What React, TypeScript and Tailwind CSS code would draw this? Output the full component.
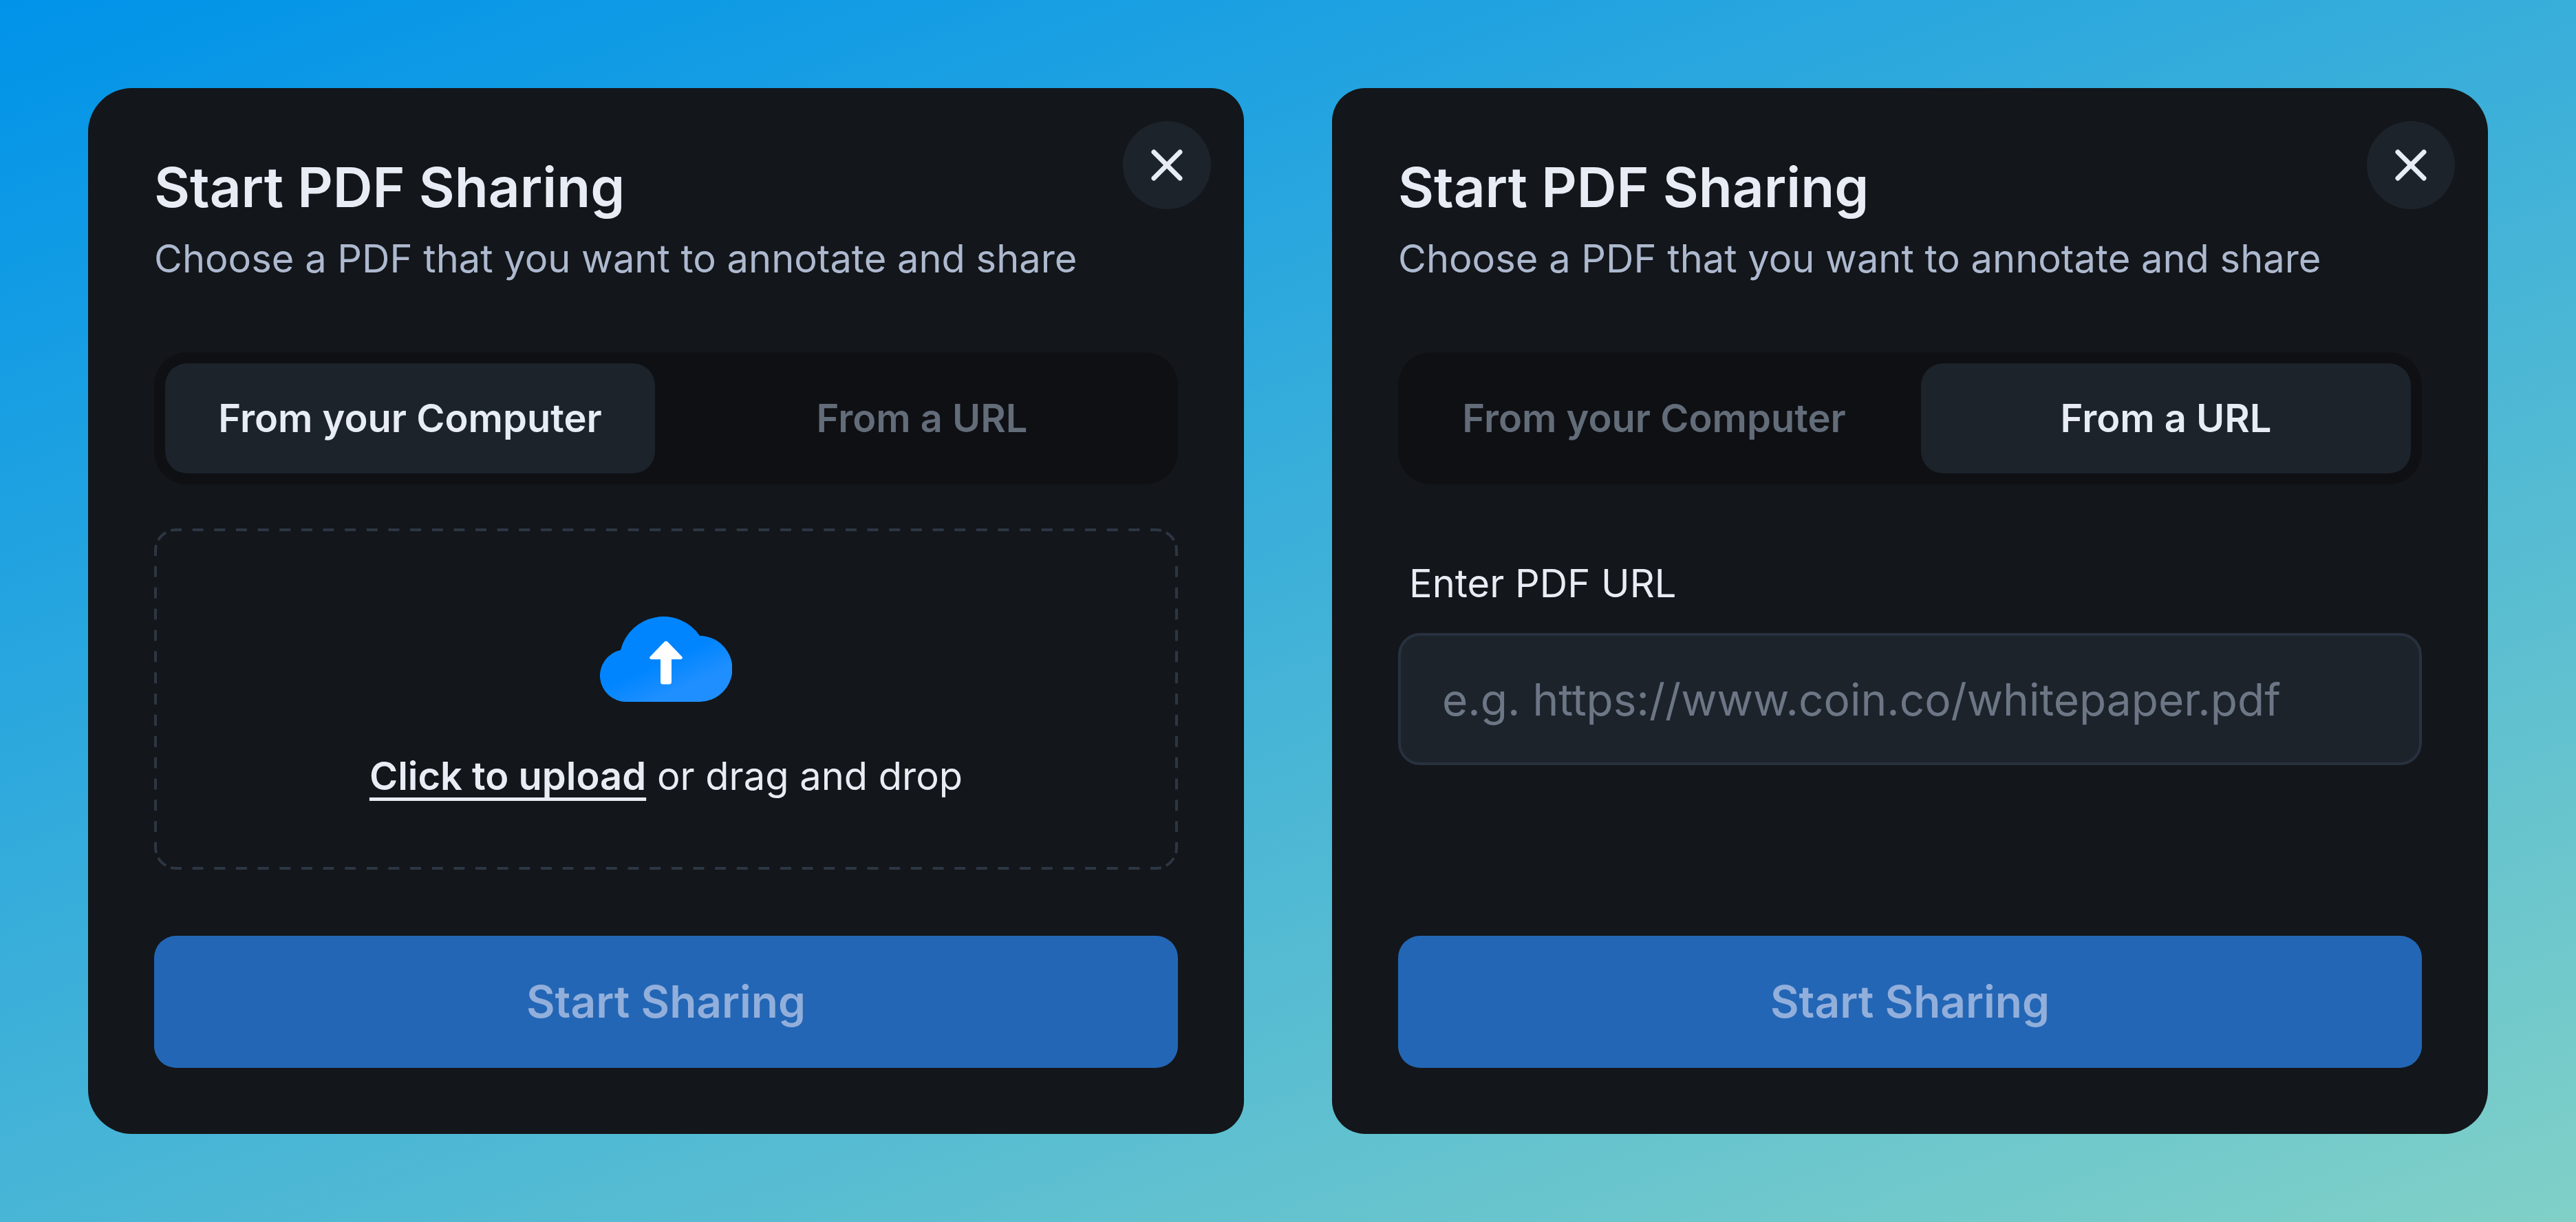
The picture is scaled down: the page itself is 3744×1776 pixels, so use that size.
import React, { useId, useState } from "react";
import { X } from "lucide-react";

type Source = "computer" | "url";

function CloudUpload() {
  return (
    <svg className="h-31 w-48" viewBox="0 0 192 124" aria-hidden="true">
      <defs>
        <linearGradient id="cloud-fill" gradientUnits="userSpaceOnUse" x1="70" y1="0" x2="125" y2="124">
          <stop offset="0.5" stopColor="#0085ff" />
          <stop offset="0.85" stopColor="#1f8fff" />
        </linearGradient>
      </defs>
      <path
        d="M38 124A38 38 0 0 1 30 48.850A64 64 0 0 1 145 28A48 48 0 0 1 144 124Z"
        fill="url(#cloud-fill)"
      />
      <path
        d="M93.200 37.200a4 4 0 0 1 5.600 0L119.300 58.500a2.200 2.200 0 0 1-1.600 3.700H104V95a3.500 3.500 0 0 1-3.500 3.500h-9A3.500 3.500 0 0 1 88 95V62.200H74.300a2.200 2.200 0 0 1-1.600-3.700Z"
        fill="#fff"
      />
    </svg>
  );
}

function DashedFrame() {
  return (
    <svg
      className="pointer-events-none absolute inset-0 h-full w-full"
      viewBox="0 0 1488 496"
      preserveAspectRatio="none"
      fill="none"
      stroke="#2d3643"
      strokeWidth="4"
      strokeDashoffset="8"
      aria-hidden="true"
    >
      <path d="M32 2H1456M32 494H1456" strokeDasharray="16 15.644" />
      <path d="M2 32V464M1486 32V464" strokeDasharray="16 14.857" />
      <path
        d="M2 32A30 30 0 0 1 32 2M1456 2A30 30 0 0 1 1486 32M1486 464A30 30 0 0 1 1456 494M32 494A30 30 0 0 1 2 464"
        strokeDasharray="16 7.562"
      />
    </svg>
  );
}

function UploadPanel() {
  return (
    <label className="relative flex cursor-pointer flex-col items-center gap-17 pt-32 pb-24 text-[56px] leading-20 text-[#e8ecf4]">
      <DashedFrame />
      <input type="file" accept="application/pdf" className="sr-only" />
      <CloudUpload />
      <span>
        <span className="font-semibold underline decoration-[5px] underline-offset-[11px] [text-decoration-skip-ink:none]">
          Click to upload
        </span>{" "}
        or drag and drop
      </span>
    </label>
  );
}

function UrlPanel() {
  const id = useId();
  return (
    <div className="flex flex-col gap-8 pt-10">
      <label htmlFor={id} className="px-4 text-[56px] leading-20 text-[#e8ecf4]">
        Enter PDF URL
      </label>
      <input
        id={id}
        type="url"
        placeholder="e.g. https://www.coin.co/whitepaper.pdf"
        className="h-48 w-full rounded-[32px] border-4 border-[#28313e] bg-[#1c232b] px-15 text-[64px] text-[#e8ecf4] outline-none placeholder:text-[#6c7685]"
      />
    </div>
  );
}

const tabs: { id: Source; label: string }[] = [
  { id: "computer", label: "From your Computer" },
  { id: "url", label: "From a URL" },
];

function ShareDialog({ initial, corners }: { initial: Source; corners: string }) {
  const [source, setSource] = useState<Source>(initial);
  return (
    <section
      className={`relative flex min-w-0 flex-1 flex-col bg-[#13161a] p-24 ${corners}`}
      role="dialog"
      aria-label="Start PDF Sharing"
    >
      <button
        type="button"
        aria-label="Close"
        className="absolute top-12 right-12 flex size-32 items-center justify-center rounded-full bg-[#1c232b] text-[#e8ecf4]"
      >
        <X className="size-19" strokeWidth={2.2} />
      </button>

      <header className="flex flex-col gap-4">
        <h2 className="text-[80px] leading-24 font-semibold text-[#e8ecf4]">Start PDF Sharing</h2>
        <p className="text-[56px] leading-20 text-[#adb9cf]">Choose a PDF that you want to annotate and share</p>
      </header>

      <div role="tablist" className="mt-24 flex h-48 gap-8 rounded-[48px] bg-[#0f1014] p-4">
        {tabs.map((tab) => (
          <button
            key={tab.id}
            type="button"
            role="tab"
            aria-selected={source === tab.id}
            onClick={() => setSource(tab.id)}
            className={`flex-1 basis-0 rounded-[32px] text-[56px] leading-20 font-semibold ${
              source === tab.id ? "bg-[#1c232b] text-[#e8ecf4]" : "text-[#636c79]"
            }`}
          >
            {tab.label}
          </button>
        ))}
      </div>

      <div className="mt-16 min-h-124">{source === "computer" ? <UploadPanel /> : <UrlPanel />}</div>

      <button
        type="button"
        className="mt-24 h-48 rounded-[32px] bg-[#2366b5] text-[64px] font-semibold text-[#92afdb]"
      >
        Start Sharing
      </button>
    </section>
  );
}

export default function App() {
  return (
    <main className="flex min-h-screen items-start gap-32 bg-[linear-gradient(160deg,#0093e9_0%,#80d0c7_100%)] p-32 font-[Inter,sans-serif] [font-optical-sizing:none]">
      <ShareDialog initial="computer" corners="rounded-l-[64px] rounded-r-[48px]" />
      <ShareDialog initial="url" corners="rounded-l-[48px] rounded-r-[64px]" />
    </main>
  );
}
